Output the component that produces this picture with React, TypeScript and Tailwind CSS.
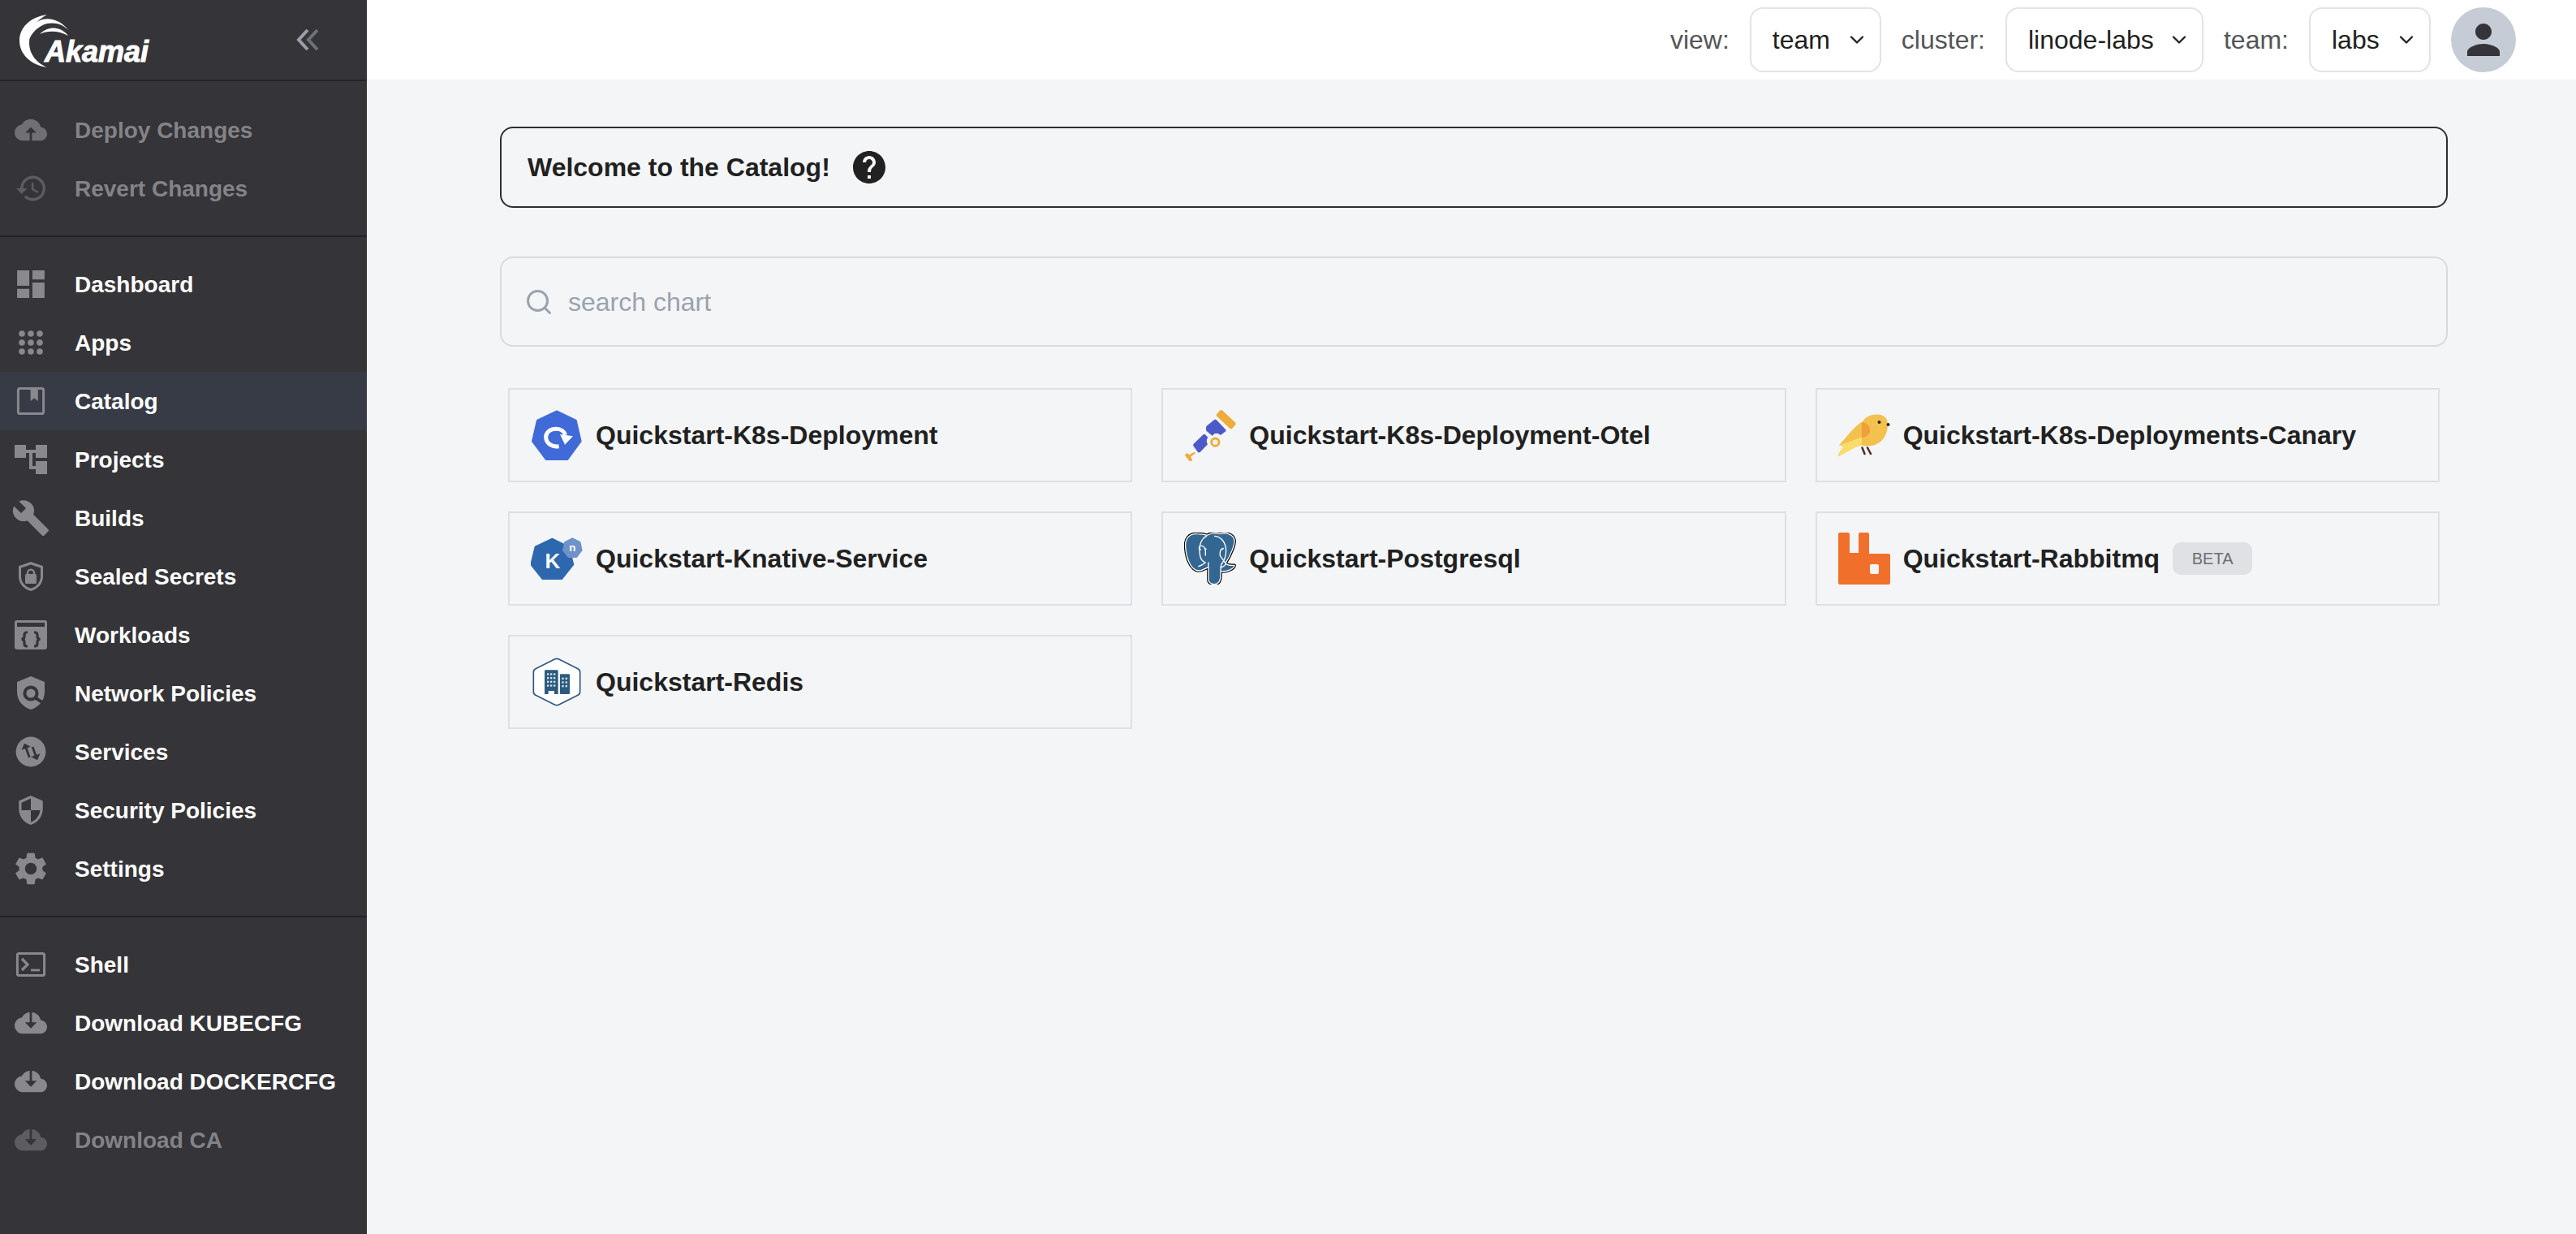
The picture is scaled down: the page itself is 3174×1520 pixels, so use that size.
import type { ReactNode } from "react";
import { ChevronDown, Search } from "lucide-react";

const DARK = "#353438";

const Icon = ({ children }: { children: ReactNode }) => (
  <svg width="48" height="48" viewBox="0 0 24 24" fill="currentColor" className="shrink-0">
    {children}
  </svg>
);

const CLOUD =
  "M19.35 10.04C18.67 6.59 15.64 4 12 4 9.11 4 6.6 5.64 5.35 8.04 2.34 8.36 0 10.91 0 14c0 3.31 2.69 6 6 6h13c2.76 0 5-2.24 5-5 0-2.64-2.05-4.78-4.65-4.96z";

const UploadIcon = () => (
  <Icon>
    <path d={CLOUD} transform="translate(2 2) scale(.8333)" />
    <path d="M12 10.3l3.4 3.4H8.6z" fill={DARK} />
    <rect x="11.3" y="13" width="1.4" height="6.4" fill={DARK} />
  </Icon>
);

const DownloadIcon = () => (
  <Icon>
    <path d={CLOUD} transform="translate(2 2) scale(.8333)" />
    <path d="M12 15.4l-3.6-3.8h7.2z" fill={DARK} />
    <rect x="11.3" y="4" width="1.4" height="8" fill={DARK} />
  </Icon>
);

const HistoryIcon = () => (
  <Icon>
    <path
      transform="translate(12 12) scale(.86) translate(-11.5 -12)"
      d="M13 3c-4.97 0-9 4.03-9 9H1l3.89 3.89.07.14L9 12H6c0-3.87 3.13-7 7-7s7 3.13 7 7-3.13 7-7 7c-1.93 0-3.68-.79-4.94-2.06l-1.42 1.42C8.27 19.99 10.51 21 13 21c4.97 0 9-4.03 9-9s-4.03-9-9-9zm-1 5v5l4.28 2.54.72-1.21-3.5-2.08V8H12z"
    />
  </Icon>
);

const DashboardIcon = () => (
  <Icon>
    <path
      transform="translate(12 12) scale(.94) translate(-12 -12)"
      d="M3 13h8V3H3v10zm0 8h8v-6H3v6zm10 0h8V11h-8v10zm0-18v6h8V3h-8z"
    />
  </Icon>
);

const AppsIcon = () => (
  <Icon>
    {[6.5, 12, 17.5].map((y) =>
      [6.5, 12, 17.5].map((x) => <circle key={`${x}-${y}`} cx={x} cy={y} r="1.9" />)
    )}
  </Icon>
);

const CatalogIcon = () => (
  <Icon>
    <rect x="4.2" y="4.2" width="15.6" height="15.6" rx="1" fill="none" stroke="currentColor" strokeWidth="1.5" />
    <path d="M11.8 4h4.6v8l-2.3-1.8-2.3 1.8z" />
  </Icon>
);

const ProjectsIcon = () => (
  <Icon>
    <path d="M22 11V3h-7v3H9V3H2v8h7V8h2v10h4v3h7v-8h-7v3h-2V8h2v3h7z" />
  </Icon>
);

const BuildsIcon = () => (
  <Icon>
    <path d="M22.7 19l-9.1-9.1c.9-2.3.4-5-1.5-6.9-2-2-5-2.4-7.4-1.3L9 6 6 9 1.6 4.7C.4 7.1.9 10.1 2.9 12.1c1.9 1.9 4.6 2.4 6.9 1.5l9.1 9.1c.4.4 1 .4 1.4 0l2.3-2.3c.5-.4.5-1.1.1-1.4z" />
  </Icon>
);

const SealedIcon = () => (
  <Icon>
    <path
      fillRule="evenodd"
      d="M12 3l7.5 2.6V12c0 4.3-3.1 7.9-7.5 9-4.4-1.1-7.5-4.7-7.5-9V5.6zM12 4.8L6 6.8V12c0 3.5 2.5 6.4 6 7.4 3.5-1 6-3.9 6-7.4V6.8z"
    />
    <rect x="8.5" y="10.5" width="7" height="6" rx=".8" />
    <path d="M10 11V9.8a2 2 0 0 1 4 0V11" fill="none" stroke="currentColor" strokeWidth="1.2" />
  </Icon>
);

const WorkloadsIcon = () => (
  <Icon>
    <rect x="2" y="3" width="20" height="18" rx="1.5" />
    <rect x="3.5" y="4.5" width="17" height="2.5" fill={DARK} />
    <g fill="none" stroke={DARK} strokeWidth="1.6">
      <path d="M10 10.5H9.5C8.5 10.5 8 11 8 12v1c0 1-.5 1.7-1.8 1.7C7.5 14.7 8 15.5 8 16.5v1c0 1 .5 1.5 1.5 1.5h.5" />
      <path d="M14 10.5h.5c1 0 1.5.5 1.5 1.500v1c0 1 .5 1.7 1.800 1.700-1.300 0-1.800.8-1.800 1.800v1c0 1-.5 1.500-1.500 1.500H14" />
    </g>
  </Icon>
);

const NetworkIcon = () => (
  <Icon>
    <path d="M12 1.5L20.5 5v6c0 5.5-3.5 9.5-8.5 11-5-1.5-8.5-5.5-8.5-11V5z" />
    <circle cx="12" cy="12" r="3.8" fill="none" stroke={DARK} strokeWidth="2" />
    <path d="M14.8 14.8l4.6 3" stroke={DARK} strokeWidth="2" />
  </Icon>
);

const ServicesIcon = () => (
  <Icon>
    <circle cx="12" cy="12" r="9.2" />
    <g transform="rotate(-20 12 12)" fill={DARK}>
      <rect x="9.3" y="8" width="1.4" height="7" />
      <path d="M10 5.8l3 3.2H7z" />
      <rect x="13.3" y="9.500" width="1.4" height="7" />
      <path d="M14 18.2l-3-3.2h6z" />
    </g>
  </Icon>
);

const SecurityIcon = () => (
  <Icon>
    <path
      transform="translate(12 12) scale(.82) translate(-12 -12)"
      d="M12 1L3 5v6c0 5.55 3.84 10.74 9 12 5.16-1.26 9-6.45 9-12V5l-9-4zm0 10.99h7c-.53 4.12-3.28 7.79-7 8.94V12H5V6.3l7-3.11v8.8z"
    />
  </Icon>
);

const SettingsIcon = () => (
  <Icon>
    <path d="M19.14 12.94c.04-.3.06-.61.06-.94 0-.32-.02-.64-.07-.94l2.03-1.58c.18-.14.23-.41.12-.61l-1.92-3.32c-.12-.22-.37-.29-.59-.22l-2.39.96c-.5-.38-1.03-.7-1.62-.94l-.36-2.54c-.04-.24-.24-.41-.48-.41h-3.84c-.24 0-.43.17-.47.41l-.36 2.54c-.59.24-1.13.57-1.62.94l-2.39-.96c-.22-.08-.47 0-.59.22L2.74 8.87c-.12.21-.08.47.12.61l2.03 1.58c-.05.3-.09.63-.09.94s.02.64.07.94l-2.03 1.58c-.18.14-.23.41-.12.61l1.92 3.32c.12.22.37.29.59.22l2.39-.96c.5.38 1.03.7 1.62.94l.36 2.54c.05.24.24.41.48.41h3.84c.24 0 .44-.17.47-.41l.36-2.54c.59-.24 1.13-.56 1.62-.94l2.39.96c.22.08.47 0 .59-.22l1.92-3.32c.12-.22.07-.47-.12-.61l-2.01-1.58zM12 15.6c-1.98 0-3.6-1.62-3.6-3.6s1.62-3.6 3.6-3.6 3.6 1.62 3.6 3.6-1.62 3.6-3.6 3.6z" />
  </Icon>
);

const ShellIcon = () => (
  <Icon>
    <rect x="3.7" y="5.2" width="16.6" height="13.6" rx="1" fill="none" stroke="currentColor" strokeWidth="1.5" />
    <path d="M6.5 8.5L10 12l-3.5 3.5" fill="none" stroke="currentColor" strokeWidth="1.6" />
    <rect x="12" y="14.8" width="5.5" height="1.4" />
  </Icon>
);

interface NavItem {
  label: string;
  icon: ReactNode;
  dim?: string;
  active?: boolean;
}

const actions: NavItem[] = [
  { label: "Deploy Changes", icon: <UploadIcon />, dim: "text-[#6f6f74]" },
  { label: "Revert Changes", icon: <HistoryIcon />, dim: "text-[#5c5c61]" },
];

const mainNav: NavItem[] = [
  { label: "Dashboard", icon: <DashboardIcon /> },
  { label: "Apps", icon: <AppsIcon /> },
  { label: "Catalog", icon: <CatalogIcon />, active: true },
  { label: "Projects", icon: <ProjectsIcon /> },
  { label: "Builds", icon: <BuildsIcon /> },
  { label: "Sealed Secrets", icon: <SealedIcon /> },
  { label: "Workloads", icon: <WorkloadsIcon /> },
  { label: "Network Policies", icon: <NetworkIcon /> },
  { label: "Services", icon: <ServicesIcon /> },
  { label: "Security Policies", icon: <SecurityIcon /> },
  { label: "Settings", icon: <SettingsIcon /> },
];

const toolNav: NavItem[] = [
  { label: "Shell", icon: <ShellIcon /> },
  { label: "Download KUBECFG", icon: <DownloadIcon /> },
  { label: "Download DOCKERCFG", icon: <DownloadIcon /> },
  { label: "Download CA", icon: <DownloadIcon />, dim: "text-[#5c5c61]" },
];

function NavRow({ item }: { item: NavItem }) {
  return (
    <div className={`flex h-[72px] items-center gap-[30px] pl-[14px] ${item.active ? "bg-[#373b46]" : ""}`}>
      <span className={item.dim ?? "text-[#88888d]"}>{item.icon}</span>
      <span className={`pt-[2px] text-[28px] font-bold ${item.dim ? "text-[#838388]" : "text-white"}`}>
        {item.label}
      </span>
    </div>
  );
}

function AkamaiLogo() {
  return (
    <div className="relative h-[66px] w-[162px]">
      <svg width="70" height="66" viewBox="24 18 70 66" className="absolute left-0 top-0" fill="#fff">
        <path d="M58 18C37 21 24 34 24 50c0 17 14 30 34 33-12-5-22-16-22-30 0-15 8-28 22-35z" />
        <path d="M84 37c-7-10-20-16-32-13-10 3-16 13-17 27 4-11 12-19 23-22 10-2 20 1 26 8z" />
        <path d="M84 44c-8-10-22-14-35-2 11-5 24-4 35 2z" />
      </svg>
      <span className="absolute left-[31px] top-[24px] text-[36px] font-bold italic leading-[44px] text-white [-webkit-text-stroke:1px_white]">
        Akamai
      </span>
    </div>
  );
}

function Sidebar() {
  return (
    <aside className="h-full w-[452px] shrink-0 bg-[#353438]">
      <div className="flex h-[100px] items-start border-b-2 border-[#232326] pl-[24px] pt-[18px]">
        <AkamaiLogo />
        <svg width="30" height="28" viewBox="0 0 30 28" className="ml-[178px] mt-[17px]" fill="none" strokeWidth="4">
          <path d="M27 2L16 14l11 12" stroke="#6d7179" />
          <path d="M15 2L4 14l11 12" stroke="#9ba0a8" />
        </svg>
      </div>
      <nav className="border-b-2 border-[#232326] pb-[22px] pt-[24px]">
        {actions.map((item) => (
          <NavRow key={item.label} item={item} />
        ))}
      </nav>
      <nav className="border-b-2 border-[#232326] py-[22px]">
        {mainNav.map((item) => (
          <NavRow key={item.label} item={item} />
        ))}
      </nav>
      <nav className="py-[22px]">
        {toolNav.map((item) => (
          <NavRow key={item.label} item={item} />
        ))}
      </nav>
    </aside>
  );
}

function Picker({ label, value, width }: { label: string; value: string; width: string }) {
  return (
    <>
      <span className="text-[32px] text-[#555558]">{label}</span>
      <div className={`flex h-[80px] items-center justify-between rounded-[16px] border-2 border-[#e2e3e5] pl-[26px] pr-[14px] ${width}`}>
        <span className="text-[32px] text-[#212121]">{value}</span>
        <ChevronDown size={28} strokeWidth={2} className="text-[#212121]" />
      </div>
    </>
  );
}

function TopBar() {
  return (
    <header className="flex h-[98px] items-center justify-end gap-[25px] bg-white pr-[74px]">
      <Picker label="view:" value="team" width="w-[162px]" />
      <Picker label="cluster:" value="linode-labs" width="w-[244px]" />
      <Picker label="team:" value="labs" width="w-[150px]" />
      <div className="flex h-[80px] w-[80px] items-center justify-center rounded-full bg-[#c5ccd6]">
        <svg width="60" height="60" viewBox="0 0 24 24" fill="#35343a">
          <path d="M12 12c2.21 0 4-1.79 4-4s-1.79-4-4-4-4 1.79-4 4 1.79 4 4 4zm0 2c-2.67 0-8 1.34-8 4v2h16v-2c0-2.66-5.33-4-8-4z" />
        </svg>
      </div>
    </header>
  );
}

// chart logos, drawn in the coordinates of a 192 unit box
const DeploymentLogo = () => (
  <svg width="64" height="64" viewBox="132 131 192 192">
    <path d="M228 137l72 35 18 78-50 68h-80l-51-68 18-78z" fill="#3f6ad8" stroke="#3f6ad8" strokeWidth="4" strokeLinejoin="round" />
    <path d="M236 268C208 272 188 256 188 234 188 216 205 204 226 204c18 0 30 10 34 22" fill="none" stroke="#fff" strokeWidth="15" />
    <path d="M240 224l48 7-30 31z" fill="#fff" />
  </svg>
);

const OtelLogo = () => (
  <svg width="64" height="64" viewBox="117 130 192 192">
    <rect x="233" y="153" width="78" height="30" rx="7" transform="rotate(43 272 168)" fill="#eeac3c" />
    <path d="M200 192l28-22c3-2 7-2 10 1l32 34c2 3 2 6-1 8l-18 13c-10-10-24-8-29 3l-22-18c-3-5-3-14 0-19z" fill="#4d58c9" />
    <path d="M152 258l36-34c2-2 5-2 7 0l10 10c-6 8-6 18-1 26l-28 29c-3 2-6 2-8 0l-16-22c-2-3-2-6 0-9z" fill="#4d58c9" />
    <circle cx="232" cy="252" r="14" fill="none" stroke="#eeac3c" strokeWidth="9" />
    <path d="M119 299l10-7 7 7 19-11 4 5-18 13 5 8c2 3 0 6-3 8-3 2-6 1-7-1z" fill="#eeac3c" />
  </svg>
);

const CanaryLogo = () => (
  <svg width="64" height="64" viewBox="0 -6.5 64 64">
    <path d="M1 38C12 26 20 14 30 9c3-6 10-9 18-9 9 0 13 6 13 12 0 8-3 18-11 23-6 4-14 5-21 3z" fill="#f2c14e" />
    <path d="M1 38l28-10v10C20 40 8 48 0 52c-1-2 2-7 6-12z" fill="#f9dc6a" />
    <path d="M29 9.5c7 .5 11 6.5 10 12.5-1 3-6 6-10 7z" fill="#f19f3c" />
    <path d="M29.5 41l3 7.5M36 41l4 7.5" stroke="#4a3428" strokeWidth="2.6" strokeLinecap="round" />
    <circle cx="50.5" cy="9.5" r="2" fill="#2b2320" />
    <circle cx="61.5" cy="12.5" r="2" fill="#2b2320" />
  </svg>
);

const KnativeLogo = () => (
  <svg width="64" height="64" viewBox="132 588 192 192">
    <path d="M211 610l62 30 17 66-43 54h-72l-43-54 16-66z" fill="#2d68ae" stroke="#2d68ae" strokeWidth="4" strokeLinejoin="round" />
    <text x="213" y="720" textAnchor="middle" fontSize="78" fontWeight="700" fill="#fff" fontFamily="Liberation Sans, sans-serif">K</text>
    <path d="M286 607l30 15 7 32-21 27h-32l-21-27 7-32z" fill="#6e92c9" />
    <text x="286" y="658" textAnchor="middle" fontSize="40" fontWeight="700" fill="#fff" fontFamily="Liberation Sans, sans-serif">n</text>
  </svg>
);

const ELEPHANT =
  "M165 592c-30-2-45 18-43 48 3 40 18 85 48 88 15 0 25-8 37-13v45c0 15 18 22 33 15 12-7 12-25 12-45 23 5 53-12 51-22-13 0-28 2-33-8 20-30 35-70 33-85-3-20-28-30-53-23-15-4-35-2-50 5-10-5-20-5-35-5z";

const PostgresLogo = () => (
  <svg width="64" height="64" viewBox="117 587 192 192">
    <path d={ELEPHANT} fill="#000" stroke="#000" strokeWidth="11" strokeLinejoin="round" />
    <path d={ELEPHANT} fill="#336791" stroke="#fff" strokeWidth="4" strokeLinejoin="round" />
    <g fill="none" stroke="#fff" strokeWidth="4" strokeLinecap="round" strokeLinejoin="round">
      <path d="M200 600c-22 10-30 40-24 72 2 14 10 22 20 26-8 6-18 12-26 14" />
      <path d="M230 600c25 2 42 25 42 55 0 20-10 40-18 50l-2 22" />
      <path d="M178 650c-10-3-6-15 4-14 10 1 16 10 14 35" />
      <path d="M262 645c-9 2-14 12-12 28l22 30c-6 8-14 12-20 12" />
      <path d="M207 712v-14" />
    </g>
    <circle cx="197" cy="648" r="3" fill="#fff" />
    <circle cx="259" cy="648" r="3" fill="#fff" />
  </svg>
);

const RabbitLogo = () => (
  <svg width="64" height="64" viewBox="0 0 64 64">
    <path
      fillRule="evenodd"
      d="M2 0h10a2 2 0 0 1 2 2v23h11V2a2 2 0 0 1 2-2h9a2 2 0 0 1 2 2v24h24a2 2 0 0 1 2 2v34a2 2 0 0 1-2 2H2a2 2 0 0 1-2-2V2a2 2 0 0 1 2-2zM41 39a2 2 0 0 0-2 2v8a2 2 0 0 0 2 2h7a2 2 0 0 0 2-2v-8a2 2 0 0 0-2-2z"
      fill="#f0702b"
    />
  </svg>
);

const RedisLogo = () => (
  <svg width="64" height="64" viewBox="132 1044 192 192">
    <path
      d="M220 1056q8-4 16 0l70 35q8 4 8 13v72q0 9-8 13l-70 35q-8 4-16 0l-70-35q-8-4-8-13v-72q0-9 8-13z"
      fill="#fff"
      stroke="#2f5880"
      strokeWidth="5"
    />
    <path d="M183 1100a4 4 0 0 1 4-4h42a4 4 0 0 1 4 4v85h-14v-12h-22v12h-14z" fill="#2c5b7f" />
    <rect x="240" y="1111" width="36" height="74" rx="3" fill="#2c5b7f" />
    <g fill="#d5e0e8">
      {[1108, 1122, 1136, 1150].map((y) =>
        [192, 204, 216].map((x) => <rect key={`a${x}-${y}`} x={x} y={y} width="7" height="7" />)
      )}
      {[1124, 1138, 1152].map((y) =>
        [247, 260].map((x) => <rect key={`b${x}-${y}`} x={x} y={y} width="7" height="7" />)
      )}
    </g>
  </svg>
);

const charts = [
  { name: "Quickstart-K8s-Deployment", logo: <DeploymentLogo /> },
  { name: "Quickstart-K8s-Deployment-Otel", logo: <OtelLogo /> },
  { name: "Quickstart-K8s-Deployments-Canary", logo: <CanaryLogo /> },
  { name: "Quickstart-Knative-Service", logo: <KnativeLogo /> },
  { name: "Quickstart-Postgresql", logo: <PostgresLogo /> },
  { name: "Quickstart-Rabbitmq", logo: <RabbitLogo />, beta: true },
  { name: "Quickstart-Redis", logo: <RedisLogo /> },
];

export default function App() {
  return (
    <div className="flex h-[1520px] w-[3174px] overflow-hidden bg-[#f4f5f7] font-['Liberation_Sans',Arial,sans-serif] text-[#212121]">
      <Sidebar />
      <div className="min-w-0 flex-1">
        <TopBar />
        <main className="ml-[164px] w-[2400px] pt-[58px]">
          <div className="flex h-[100px] items-center gap-[24px] rounded-[16px] border-2 border-[#2f2f33] pl-[32px]">
            <span className="text-[32px] font-bold">Welcome to the Catalog!</span>
            <svg width="48" height="48" viewBox="0 0 24 24" fill="#212121">
              <path d="M12 2C6.48 2 2 6.48 2 12s4.48 10 10 10 10-4.48 10-10S17.52 2 12 2zm1 17h-2v-2h2v2zm2.07-7.75l-.9.92C13.45 12.9 13 13.5 13 15h-2v-.5c0-1.1.45-2.1 1.17-2.83l1.24-1.26c.37-.36.59-.86.59-1.41 0-1.1-.9-2-2-2s-2 .9-2 2H8c0-2.21 1.79-4 4-4s4 1.79 4 4c0 .88-.36 1.68-.93 2.25z" />
            </svg>
          </div>
          <div className="mt-[60px] flex h-[111px] items-center gap-[18px] rounded-[16px] border-2 border-[#d9dadd] pl-[28px]">
            <Search size={36} strokeWidth={2} className="text-[#9aa3ae]" />
            <input
              placeholder="search chart"
              className="w-[1200px] bg-transparent text-[32px] outline-none placeholder:text-[#9aa3ae]"
            />
          </div>
          <div className="mt-[51px] grid grid-cols-3 gap-[36px] px-[10px]">
            {charts.map((chart) => (
              <div
                key={chart.name}
                className="flex h-[116px] items-center gap-[16px] border-2 border-[#dfe0e4] pl-[26px]"
              >
                {chart.logo}
                <span className="text-[32px] font-bold">{chart.name}</span>
                {chart.beta && (
                  <span className="flex h-[40px] w-[98px] items-center justify-center rounded-[10px] bg-[#e0e1e4] text-[20px] text-[#6b6e73]">
                    BETA
                  </span>
                )}
              </div>
            ))}
          </div>
        </main>
      </div>
    </div>
  );
}
